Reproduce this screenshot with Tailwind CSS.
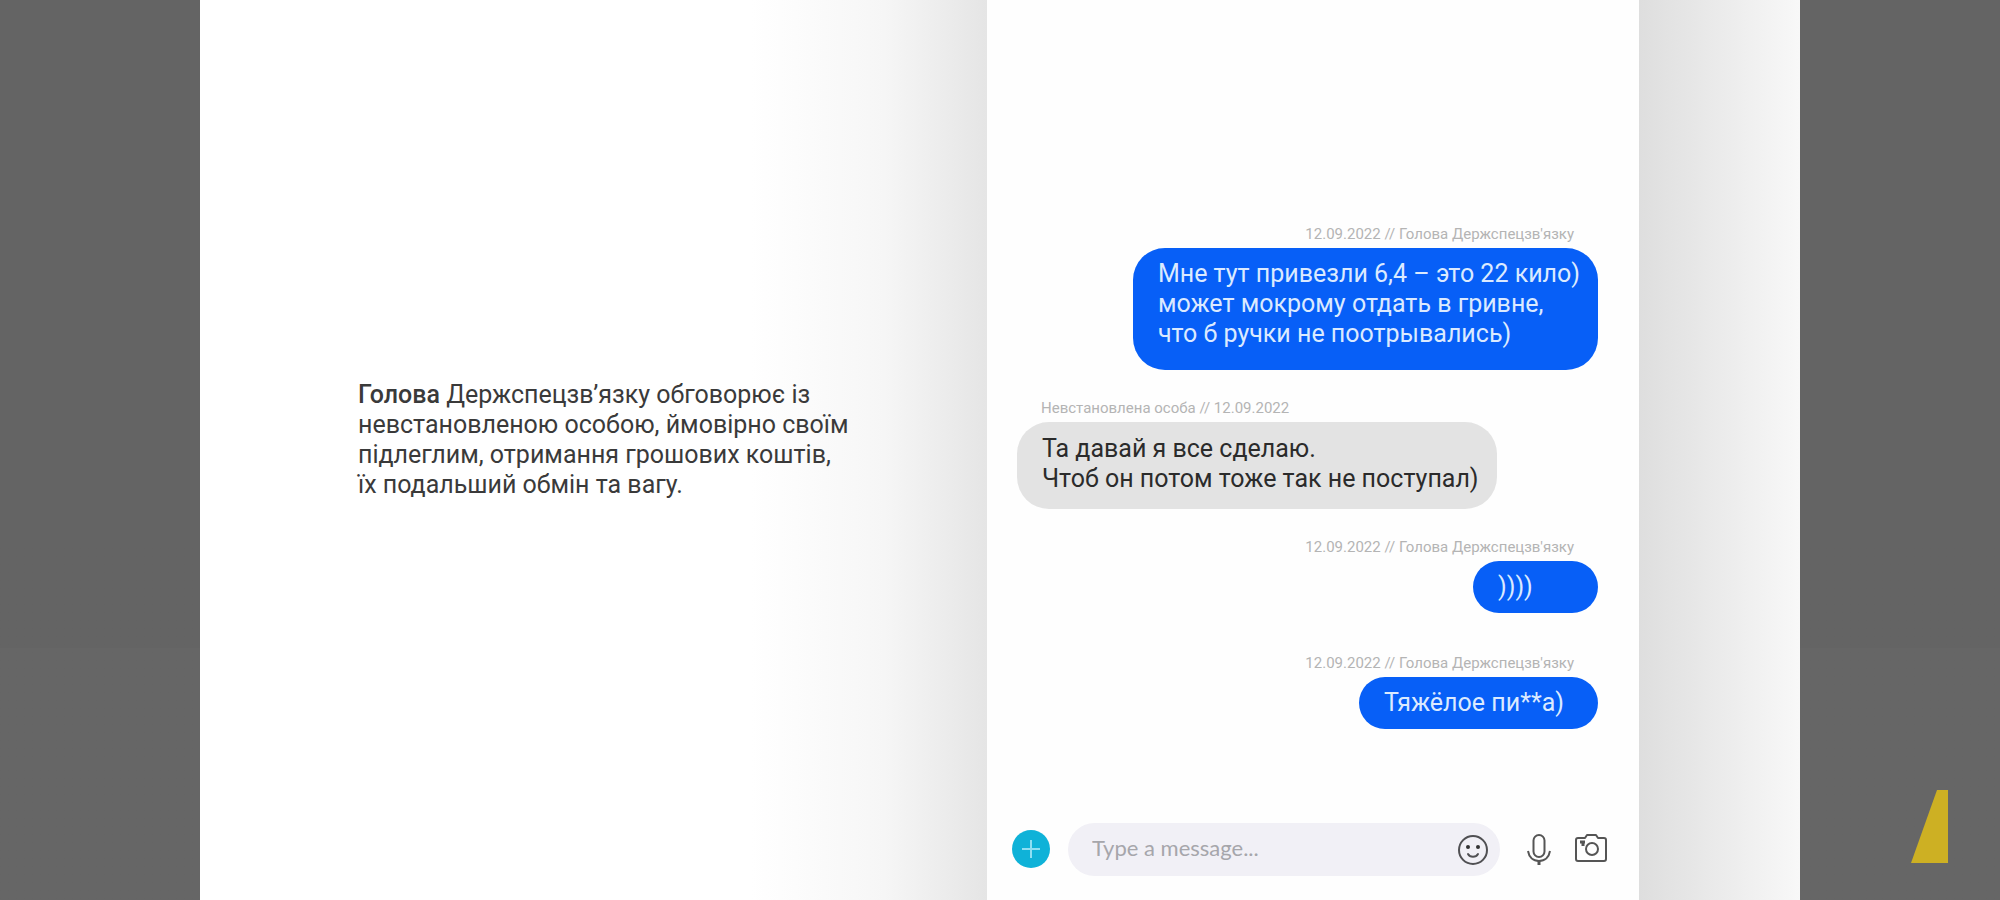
<!DOCTYPE html>
<html lang="uk">
<head>
  <meta charset="UTF-8">
  <meta name="viewport" content="width=device-width, initial-scale=1.0">
  <title>Листування</title>
  <script src="https://cdn.jsdelivr.net/npm/@tailwindcss/browser@4"></script>
</head>
<body class="bg-linear-to-b from-[#646464] from-72% to-[#666666] to-72% min-h-screen font-['Roboto',sans-serif]">
  <main class="relative flex justify-center min-h-screen">
    <div class="grid grid-cols-[787fr_652fr_161fr] w-4/5 bg-white">

      <!-- Description -->
      <section class="flex items-center pl-[158px] pb-5 bg-linear-to-r from-white from-70% via-[#f6f6f6] via-87% to-[#e5e5e5]">
        <p class="text-[25px] leading-[30px] text-[#3a3a3a] whitespace-nowrap">
          <span class="font-medium">Голова</span> Держспецзв’язку обговорює із<br>
          невстановленою особою, ймовірно своїм<br>
          підлеглим, отримання грошових коштів,<br>
          їх подальший обмін та вагу.
        </p>
      </section>

      <!-- Chat -->
      <section class="flex flex-col bg-[#fefefe]">
        <ol class="flex flex-col flex-1 justify-end gap-7 pl-[30px] pr-[41px] pb-[94px] text-[25px] leading-[30px] whitespace-nowrap">
          <li class="flex flex-col items-end gap-1">
            <span class="pr-6 text-[15px] leading-5 text-[#b4b4b4]">12.09.2022 // Голова Держспецзв'язку</span>
            <p class="rounded-[32px] bg-[#075ff7] pt-[11px] pb-[21px] pl-[25px] pr-[18px] text-[#dbeaff]">
              Мне тут привезли 6,4 – это 22 кило)<br>
              может мокрому отдать в гривне,<br>
              что б ручки не поотрывались)
            </p>
          </li>
          <li class="flex flex-col items-start gap-1">
            <span class="pl-6 text-[15px] leading-5 text-[#b4b4b4]">Невстановлена особа // 12.09.2022</span>
            <p class="rounded-[32px] bg-[#e3e3e3] pt-3 pb-[15px] pl-[25px] pr-[18px] text-[#2b2b2b]">
              Та давай я все сделаю.<br>
              Чтоб он потом тоже так не поступал)
            </p>
          </li>
          <li class="flex flex-col items-end gap-1">
            <span class="pr-6 text-[15px] leading-5 text-[#b4b4b4]">12.09.2022 // Голова Держспецзв'язку</span>
            <p class="min-w-[125px] rounded-[32px] bg-[#075ff7] py-[11px] pl-[25px] text-[#dbeaff]">))))</p>
          </li>
          <li class="flex flex-col items-end gap-1 mt-3">
            <span class="pr-6 text-[15px] leading-5 text-[#b4b4b4]">12.09.2022 // Голова Держспецзв'язку</span>
            <p class="rounded-[32px] bg-[#075ff7] py-[11px] pl-[25px] pr-[34px] text-[#dbeaff]">Тяжёлое пи**а)</p>
          </li>
        </ol>

        <form class="flex items-center pl-6 pr-8 pb-6">
          <button type="button" aria-label="Add" class="shrink-0 mr-[17px]">
            <svg class="size-10" viewBox="0 0 40 40" fill="none">
              <circle cx="20" cy="19" r="19" fill="#0fb2d8"/>
              <path d="M20 10v18M11 19h18" stroke="#8fdff2" stroke-width="2"/>
            </svg>
          </button>
          <div class="flex flex-1 items-center h-[53px] min-w-0 rounded-full bg-[#f1f0f6] pl-6 pr-[11px]">
            <input type="text" aria-label="Message" placeholder="Type a message..." class="flex-1 min-w-0 pb-1 bg-transparent font-['Lato',sans-serif] text-[22px] text-[#333333] placeholder:text-[#a6a6ab] outline-none">
            <button type="button" aria-label="Emoji">
              <svg class="size-8" viewBox="0 0 32 32" fill="none" stroke="#505053" stroke-width="2" stroke-linecap="round">
                <circle cx="16" cy="16" r="14"/>
                <circle cx="11" cy="13" r="2" fill="#333333" stroke="none"/>
                <circle cx="21" cy="13" r="2" fill="#333333" stroke="none"/>
                <path d="M11 20c2 3.6 8 3.6 10 0"/>
              </svg>
            </button>
          </div>
          <button type="button" aria-label="Voice" class="shrink-0 ml-[26px] mr-[23px]">
            <svg class="w-[26px] h-8" viewBox="0 0 26 32" fill="none" stroke="#555555" stroke-width="2">
              <rect x="7.500" y="1" width="11" height="22" rx="5.500"/>
              <path d="M2 17c1 6 5 10 11 10s10-4 11-10"/>
              <path d="M13 27v4" stroke-width="3"/>
            </svg>
          </button>
          <button type="button" aria-label="Camera" class="shrink-0">
            <svg class="size-8" viewBox="0 0 32 32" fill="none" stroke="#555555" stroke-width="2" stroke-linejoin="round">
              <path d="M3 4h7l2-3h9l2 3h6a2 2 0 0 1 2 2v19a2 2 0 0 1-2 2H3a2 2 0 0 1-2-2V6a2 2 0 0 1 2-2z"/>
              <circle cx="17" cy="15" r="6"/>
              <path d="M5 8h5M8 8v4" stroke-width="3"/>
            </svg>
          </button>
        </form>
      </section>

      <div class="bg-linear-to-r from-[#dedede] to-[#f8f8f8]"></div>
    </div>

    <!-- Channel mark -->
    <svg class="absolute right-[52px] bottom-[37px] w-[37px] h-[73px]" viewBox="0 0 37 73">
      <path d="M26 0h11v73H0z" fill="#cdb023"/>
    </svg>
  </main>
</body>
</html>
